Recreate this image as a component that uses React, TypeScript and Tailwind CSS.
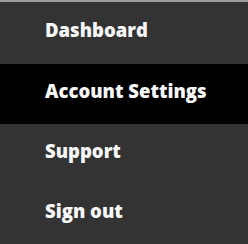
const items = [
  { label: "Dashboard", active: false },
  { label: "Account Settings", active: true },
  { label: "Support", active: false },
  { label: "Sign out", active: false },
]

export default function App() {
  return (
    <div className="w-[248px] h-[244px] bg-[#333333] border-t-2 border-[#9b9b9b] font-['Open_Sans',sans-serif]">
      <ul className="flex flex-col">
        {items.map((item, i) => (
          <li
            key={item.label}
            className={`flex items-center pl-[45px] pb-[6px] text-[18.5px] font-extrabold text-[#f7f7f7] ${i === 0 ? "h-[62px]" : "h-[60px]"} ${item.active ? "bg-black" : ""}`}
          >
            {item.label}
          </li>
        ))}
      </ul>
    </div>
  )
}
